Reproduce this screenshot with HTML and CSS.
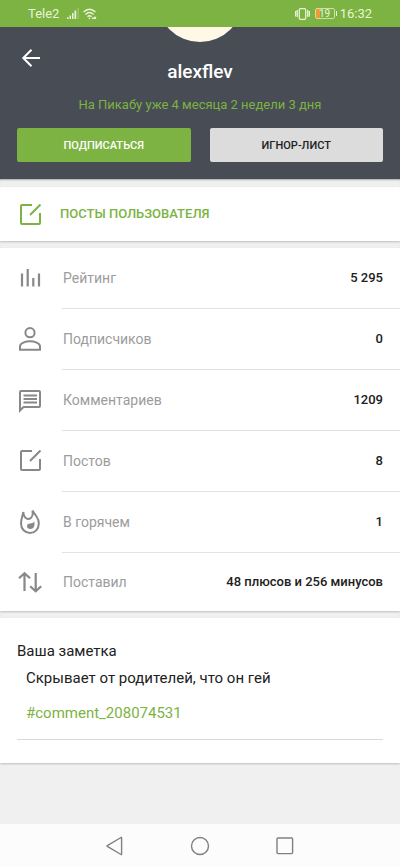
FILE: index.html
```html
<!DOCTYPE html>
<html lang="ru">
<head>
<meta charset="utf-8">
<meta name="viewport" content="width=device-width, initial-scale=1">
<title>alexflev</title>
<link rel="stylesheet" href="styles.css">
</head>
<body>
<svg class="sprite" aria-hidden="true">
  <symbol id="edit" viewBox="0 0 24 24"><path d="M14 3H4a1 1 0 0 0-1 1v17a1 1 0 0 0 1 1h17a1 1 0 0 0 1-1V11M12 13 22.500 2.500" fill="none" stroke="currentColor" stroke-width="2"/></symbol>
</svg>
<div class="status">
  <div class="status-group">
    <span>Tele2</span>
    <svg width="12" height="12" viewBox="0 0 12 12" fill="currentColor"><path d="M0 9.200h1.500V11H0zM2.500 7.500H4V11H2.500zM5 5h1.500v6H5zM7.500 2.500h1.700V11H7.500z"/><path d="M10.600 0h1v11h-1z" opacity=".4"/></svg>
    <svg class="wifi" width="14" height="12" viewBox="0 0 14 12" fill="none" stroke="currentColor" stroke-width="1.400"><path d="M.5 4q6-5.500 12 0M2.500 6.400q4-3.600 8 0M4.500 8.700q2-1.800 4 0"/><circle cx="6.500" cy="10.400" r=".8" fill="currentColor" stroke="none"/><path d="M9 10.200h4M11.500 8.800l1.500 1.400"/></svg>
  </div>
  <div class="status-group right">
    <svg width="15" height="12" viewBox="0 0 15 12" fill="none" stroke="currentColor" stroke-width="1.200"><rect x="4.300" y=".7" width="6.400" height="10.600" rx="1"/><path d="M2.600 2 1.900 3.500l.7 1.300-.7 1.400.7 1.400-.7 1.400M.6 3v5.500M12.400 2l.7 1.500-.7 1.300.7 1.400-.7 1.400.7 1.400M14.400 3v5.500"/></svg>
    <span class="battery">19</span>
    <span>16:32</span>
  </div>
</div>

<header class="profile">
  <button class="back" aria-label="Назад"><svg width="20" height="20" viewBox="0 0 20 20" fill="none" stroke="currentColor" stroke-width="2"><path d="M19 10H2.500M10.500 1.800 2.300 10l8.200 8.200"/></svg></button>
  <div class="avatar"></div>
  <h1>alexflev</h1>
  <p class="since">На Пикабу уже 4 месяца 2 недели 3 дня</p>
  <div class="actions">
    <button class="btn primary">ПОДПИСАТЬСЯ</button>
    <button class="btn">ИГНОР-ЛИСТ</button>
  </div>
</header>

<main>
  <a class="card posts" href="#posts"><svg class="icon" viewBox="0 0 24 24"><use href="#edit"/></svg>ПОСТЫ ПОЛЬЗОВАТЕЛЯ</a>

  <dl class="card stats">
    <div class="row">
      <svg class="icon" viewBox="0 0 24 24"><path d="M4 6.500v13M9.700 2V19.500M15.300 11v8.500M21 6.500v13" fill="none" stroke="currentColor" stroke-width="2.200"/></svg>
      <div class="cell"><dt>Рейтинг</dt><dd>5 295</dd></div>
    </div>
    <div class="row">
      <svg class="icon" viewBox="0 0 24 24"><g fill="none" stroke="currentColor" stroke-width="2"><circle cx="12" cy="4.700" r="4.600"/><path d="M2 21.700v-3.500c0-3 5.500-5 10-5s10 2 10 5v3.500z"/></g></svg>
      <div class="cell"><dt>Подписчиков</dt><dd>0</dd></div>
    </div>
    <div class="row">
      <svg class="icon" viewBox="0 0 24 24"><path d="M2 21.500V3a1 1 0 0 1 1-1h18a1 1 0 0 1 1 1v14a1 1 0 0 1-1 1H5.500zM5.500 6.500h13.500M5.500 10h13.500M5.500 13.500h13.500" fill="none" stroke="currentColor" stroke-width="2"/></svg>
      <div class="cell"><dt>Комментариев</dt><dd>1209</dd></div>
    </div>
    <div class="row">
      <svg class="icon lifted" viewBox="0 0 24 24"><use href="#edit"/></svg>
      <div class="cell"><dt>Постов</dt><dd>8</dd></div>
    </div>
    <div class="row">
      <svg class="icon tall lifted" viewBox="0 0 24 26"><path d="M5.300 4C4.700 8 3 10.500 3 15.500 3 21 7 25 12 25s8.800-4 8.800-9.500c0-3-.8-5-2.300-7-1.400-2-2.600-3.800-4-6 .5 3.500 0 7.300-3 8.300C8.500 11.800 5.500 9 5.300 4z" fill="none" stroke="currentColor" stroke-width="2"/><path d="M16.300 13.500c.8 4.500-.6 7.500-4 7.500-2 0-3.300-1.200-3.300-3 0-1.600 1.300-2.300 3-2.500 1.800-.2 3.300-.5 4.300-2z" fill="currentColor"/></svg>
      <div class="cell"><dt>В горячем</dt><dd>1</dd></div>
    </div>
    <div class="row">
      <svg class="icon" viewBox="0 0 24 24"><path d="M6.500 21V3.500M1 8.300l5.500-5.100L12 8.300M17.700 3v18M12.200 16.200l5.500 5.100 5.500-5.100" fill="none" stroke="currentColor" stroke-width="2.200"/></svg>
      <div class="cell"><dt>Поставил</dt><dd>48 плюсов и 256 минусов</dd></div>
    </div>
  </dl>

  <section class="card note">
    <h2>Ваша заметка</h2>
    <div class="note-body">
      <p>Скрывает от родителей, что он гей</p>
      <a href="#comment_208074531">#comment_208074531</a>
    </div>
  </section>
</main>

<nav class="navbar">
  <button aria-label="Назад"><svg width="20" height="20" viewBox="0 0 20 20"><path d="M16.600 1.800v16.400q0 .6-.6.300L2.300 10.400q-.6-.4 0-.8L16 1.500q.6-.3.6.3z"/></svg></button>
  <button aria-label="Домой"><svg width="20" height="20" viewBox="0 0 20 20"><circle cx="10" cy="10" r="8.500"/></svg></button>
  <button aria-label="Недавние"><svg width="20" height="20" viewBox="0 0 20 20"><rect x="2" y="2" width="15.600" height="15.600" rx="1"/></svg></button>
</nav>
</body>
</html>
```
FILE: styles.css
```css
* { box-sizing: border-box; }
body {
  margin: 0;
  min-height: 100vh;
  display: flex;
  flex-direction: column;
  background: #f0f0f0;
  color: #212121;
  font: 13px/20px Roboto, sans-serif;
}
h1, h2, p, dl, dt, dd { margin: 0; font-weight: 400; }
button { font-family: inherit; border: 0; padding: 0; background: none; color: inherit; }
a { color: #7cb342; text-decoration: none; }
svg { display: block; flex: none; overflow: visible; }
.sprite { position: absolute; width: 0; height: 0; }

.status {
  display: flex;
  justify-content: space-between;
  height: 27px;
  padding: 0 28px;
  background: #7cb342;
  color: #e9f5d8;
}
.status-group { display: flex; align-items: center; gap: 8px; }
.wifi { margin-left: -4px; }
.right { gap: 5px; }
.battery {
  position: relative;
  width: 20px;
  height: 11px;
  border: 1px solid #c9e0a9;
  border-radius: 2px;
  background: linear-gradient(to right, #f29a2e 4px, transparent 4px);
  font-size: 10px;
  line-height: 9px;
  text-align: center;
}
.battery::after {
  content: "";
  position: absolute;
  right: -3px;
  top: 2px;
  width: 1px;
  height: 5px;
  background: #e9f5d8;
}

.profile {
  position: relative;
  overflow: hidden;
  padding: 0 17px 17px;
  background: #484c55;
  color: #fff;
  text-align: center;
}
.back { position: absolute; left: 21px; top: 21px; }
.avatar {
  width: 86px;
  height: 86px;
  margin: -71px auto 0;
  border-radius: 50%;
  background: #fff8e7;
}
.profile h1 { margin-top: 18px; font-size: 19px; line-height: 24px; font-weight: 500; }
.since { margin-top: 11px; color: #7cb342; }
.actions { display: flex; gap: 19px; margin-top: 13px; }
.btn {
  flex: 1;
  height: 34px;
  border-radius: 2px;
  background: #dcdcdc;
  color: #212121;
  font-size: 11px;
  font-weight: 500;
}
.btn.primary { background: #7cb342; color: #fff; }

main {
  display: flex;
  flex-direction: column;
  gap: 7px;
  padding-top: 8px;
  box-shadow: inset 0 2px 2px -1px #a8a8a8;
}
.card { background: #fff; box-shadow: 0 1px 2px #bdbdbd; }
.icon { width: 24px; height: 24px; }
.icon.tall { height: 26px; }
.posts {
  display: flex;
  align-items: center;
  gap: 18px;
  height: 54px;
  padding: 0 18px;
  font-weight: 500;
}
.row { display: flex; align-items: center; gap: 20px; padding-left: 18px; color: #888; }
.icon.lifted { margin-bottom: 3px; }
.cell {
  flex: 1;
  display: flex;
  align-items: center;
  justify-content: space-between;
  height: 61px;
  padding-right: 17px;
  padding-left: 1px;
  border-bottom: 1px solid #e3e3e3;
}
.row:last-child .cell { height: 58px; border: 0; }
dt { color: #9c9c9c; font-size: 14px; }
dd { color: #212121; font-weight: 500; }

.note { padding: 23px 17px; }
.note h2 { font-size: 15px; line-height: 20px; }
.note-body {
  display: flex;
  flex-direction: column;
  gap: 15px;
  padding: 7px 9px 16px;
  border-bottom: 1px solid #d9d9d9;
  font-size: 15px;
}

.navbar {
  display: flex;
  justify-content: center;
  gap: 65px;
  margin-top: auto;
  padding: 12px 0 11px;
  background: #fcfcfc;
}
.navbar svg { fill: none; stroke: #808080; stroke-width: 1.4; }
```
